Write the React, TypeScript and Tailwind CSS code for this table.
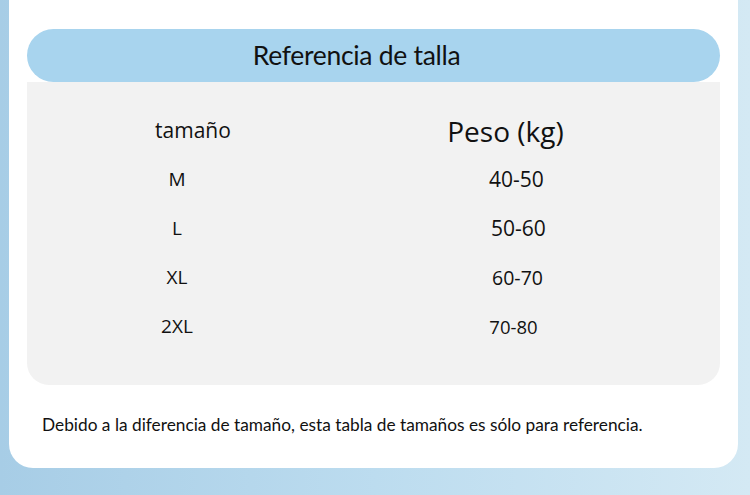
export default function App() {
  const rows = [
    { size: 'M', weight: '40-50', cls: 'text-[21px] pr-[14px]' },
    { size: 'L', weight: '50-60', cls: 'text-[21px] pr-[10px]' },
    { size: 'XL', weight: '60-70', cls: 'text-[19.5px] pr-[12px]' },
    { size: '2XL', weight: '70-80', cls: 'text-[18.5px] pr-[20px]' },
  ];

  return (
    <div className="w-[750px] h-[495px] overflow-hidden bg-gradient-to-r from-[#a7cde6] via-[#bcdcef] to-[#d4e9f4]">
      {/* Card */}
      <div className="ml-[9px] w-[729px] h-[468px] bg-white rounded-b-[24px] px-[18px] pt-[29px] flex flex-col">
        <div className="h-[53px] rounded-full bg-[#a8d4ee] flex items-center justify-center pr-[34px]">
          <span className="text-[26.5px] text-[#111] font-['Lato',sans-serif] tracking-[-0.3px]">
            Referencia de talla
          </span>
        </div>

        {/* Table */}
        <div className="h-[303px] bg-[#f2f2f2] rounded-b-[22px] pt-[24px] font-['Open_Sans',sans-serif] text-[#111]">
          <div className="grid grid-cols-[300px_1fr] h-[49px] items-center">
            <div className="text-center text-[21px] pl-[32px]">tamaño</div>
            <div className="text-center text-[28px] pr-[36px]">Peso (kg)</div>
          </div>
          {rows.map((r) => (
            <div key={r.size} className="grid grid-cols-[300px_1fr] h-[49px] items-center">
              <div className="text-center text-[19px]">{r.size}</div>
              <div className={`text-center ${r.cls}`}>{r.weight}</div>
            </div>
          ))}
        </div>

        <p className="mt-[28px] pl-[15px] text-[17.3px] leading-[24px] text-[#111] font-['Lato',sans-serif]">
          Debido a la diferencia de tamaño, esta tabla de tamaños es sólo para referencia.
        </p>
      </div>
    </div>
  );
}
